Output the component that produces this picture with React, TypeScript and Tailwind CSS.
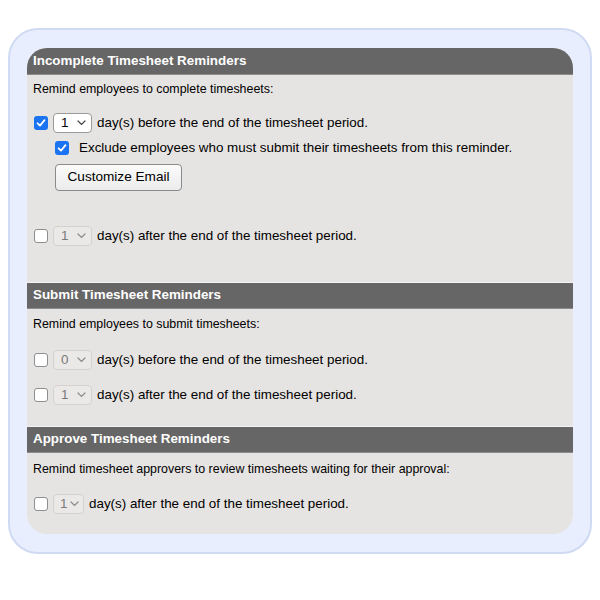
import type { ReactNode } from "react";

const font = { fontFamily: '"Liberation Sans", Arial, Helvetica, sans-serif' };

function Check({ checked }: { checked?: boolean }) {
  if (checked) {
    return (
      <span className="flex h-[14px] w-[14px] shrink-0 items-center justify-center rounded-[3px] bg-[#1a73f0]">
        <svg width="10" height="10" viewBox="0 0 10 10" fill="none">
          <path d="M1.6 5.3 L4 7.6 L8.5 2.2" stroke="#fff" strokeWidth="1.8" strokeLinecap="round" strokeLinejoin="round" />
        </svg>
      </span>
    );
  }
  return <span className="h-[14px] w-[14px] shrink-0 rounded-[3px] border border-[#8e8e8e] bg-white" />;
}

function Select({ value, disabled, narrow }: { value: string; disabled?: boolean; narrow?: boolean }) {
  return (
    <span
      className={`flex h-[20px] shrink-0 items-center justify-between rounded-[4px] border text-[13.4px] ${
        narrow ? "w-[31px] pl-[6px] pr-[4px]" : "w-[39px] pl-[7px] pr-[5px]"
      } ${disabled ? "border-[#d4d2d0] bg-[#ebe9e7] text-[#7a7a7a]" : "border-[#9a9a9a] bg-white text-black"}`}
    >
      {value}
      <svg width="9" height="6" viewBox="0 0 9 6" fill="none">
        <path d="M1 1 L4.5 4.5 L8 1" stroke={disabled ? "#8a8a8a" : "#444"} strokeWidth="1.2" strokeLinecap="round" />
      </svg>
    </span>
  );
}

function Row({ checked, value, disabled, narrow, children, className }: {
  checked?: boolean;
  value: string;
  disabled?: boolean;
  narrow?: boolean;
  children: ReactNode;
  className?: string;
}) {
  return (
    <div className={`ml-[7px] flex h-[20px] items-center gap-[5px] text-[13.4px] text-black ${className ?? ""}`}>
      <Check checked={checked} />
      <Select value={value} disabled={disabled} narrow={narrow} />
      <span>{children}</span>
    </div>
  );
}

function Header({ title, top }: { title: string; top?: boolean }) {
  return (
    <div
      className={`flex h-[27px] items-center border-b border-[#8c8c8c] bg-[#666666] pl-[6px] text-[13.4px] font-bold text-white ${
        top ? "" : "border-t border-t-[#f4f3f2]"
      }`}
    >
      {title}
    </div>
  );
}

export default function App() {
  return (
    <div className="min-h-[600px] bg-white px-[8px] pt-[28px]" style={font}>
      <div className="h-[526px] rounded-[30px] border-2 border-[#cfdaf3] bg-[#e8eefd] px-[17px] pt-[18px]">
        <div className="h-[486px] overflow-hidden rounded-[20px] bg-[#e6e4e2]">
          <Header title="Incomplete Timesheet Reminders" top />
          <div className="pb-[36px]">
            <p className="pl-[6px] pt-[6px] text-[12.4px] leading-[16px] text-black">
              Remind employees to complete timesheets:
            </p>
            <Row checked value="1" className="mt-[16px]">
              day(s) before the end of the timesheet period.
            </Row>
            <div className="ml-[28px] mt-[7px] flex h-[16px] items-center gap-[10px] text-[13.4px] text-black">
              <Check checked />
              <span>Exclude employees who must submit their timesheets from this reminder.</span>
            </div>
            <button className="ml-[28px] mt-[8px] h-[27px] w-[127px] rounded-[4px] border border-[#8a8a8a] bg-gradient-to-b from-[#fbfbfb] to-[#ececec] text-[13.6px] text-black">
              Customize Email
            </button>
            <Row value="1" disabled className="mt-[35px]">
              day(s) after the end of the timesheet period.
            </Row>
          </div>
          <Header title="Submit Timesheet Reminders" />
          <div className="pb-[21px]">
            <p className="pl-[6px] pt-[7px] text-[12.4px] leading-[16px] text-black">
              Remind employees to submit timesheets:
            </p>
            <Row value="0" disabled className="mt-[18px]">
              day(s) before the end of the timesheet period.
            </Row>
            <Row value="1" disabled className="mt-[15px]">
              day(s) after the end of the timesheet period.
            </Row>
          </div>
          <Header title="Approve Timesheet Reminders" />
          <div>
            <p className="pl-[6px] pt-[8px] text-[12.4px] leading-[16px] text-black">
              Remind timesheet approvers to review timesheets waiting for their approval:
            </p>
            <Row value="1" disabled narrow className="mt-[17px]">
              day(s) after the end of the timesheet period.
            </Row>
          </div>
        </div>
      </div>
    </div>
  );
}
